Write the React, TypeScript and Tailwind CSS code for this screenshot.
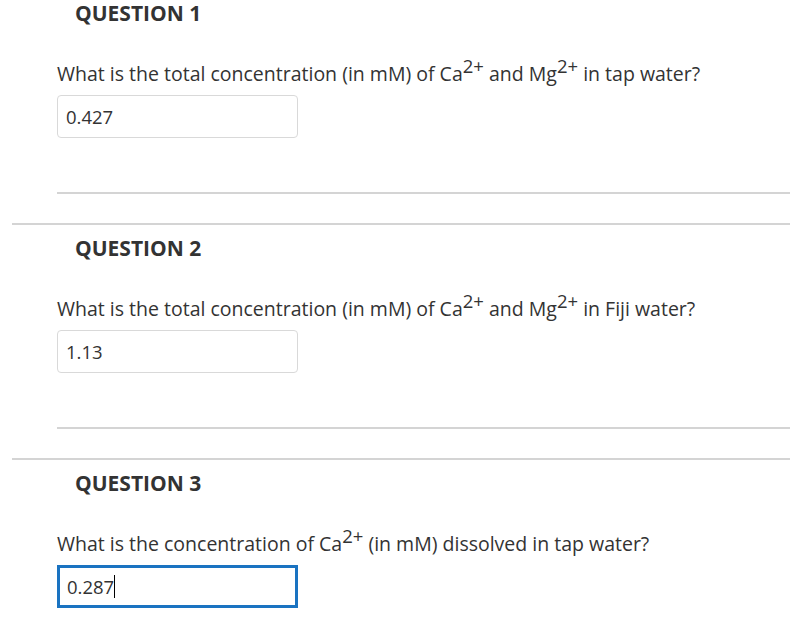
const questions = [
  { n: 1, before: 'What is the total concentration (in mM) of Ca', mid: ' and Mg', after: ' in tap water?', value: '0.427', focused: false },
  { n: 2, before: 'What is the total concentration (in mM) of Ca', mid: ' and Mg', after: ' in Fiji water?', value: '1.13', focused: false },
  { n: 3, before: 'What is the concentration of Ca', mid: null, after: ' (in mM) dissolved in tap water?', value: '0.287', focused: true },
]

const Question = ({ q }: { q: (typeof questions)[number] }) => {
  return (
    <section className="ml-[12px] border-t-2 border-[#d4d4d4] pt-[9px]">
      <h2 className="pl-[63px] text-[21px] leading-[28px] font-bold text-[#333333]">
        QUESTION {q.n}
      </h2>

      <p className="mt-[35px] pl-[45px] text-[19.5px] leading-[24px] text-[#333333]">
        {q.before}
        <sup className="text-[0.95em] -top-[0.45em]">2+</sup>
        {q.mid && (
          <>
            {q.mid}
            <sup className="text-[0.95em] -top-[0.45em]">2+</sup>
          </>
        )}
        {q.after}
      </p>

      {/* answer box */}
      <div className="ml-[45px] mt-[9px] w-[241px]">
        {q.focused ? (
          <div className="h-[43px] border-[3px] border-[#1a73c1] pl-[7px] flex items-center text-[18.5px] text-[#333333]">
            {q.value}
            <span className="inline-block w-px h-[23px] bg-black" />
          </div>
        ) : (
          <div className="h-[43px] rounded-[4px] border border-[#d9d9d9] pl-[8px] flex items-center text-[18.5px] text-[#333333]">
            {q.value}
          </div>
        )}
      </div>

      <div className="ml-[45px] mt-[54px] border-t-2 border-[#d4d4d4] h-[31px]" />
    </section>
  )
}

export default function App() {
  return (
    <div className="w-[790px] h-[637px] overflow-hidden bg-white" style={{ fontFamily: '"Open Sans", sans-serif' }}>
      <div className="-mt-[12px]">
        {questions.map((q) => (
          <Question key={q.n} q={q} />
        ))}
      </div>
    </div>
  )
}
